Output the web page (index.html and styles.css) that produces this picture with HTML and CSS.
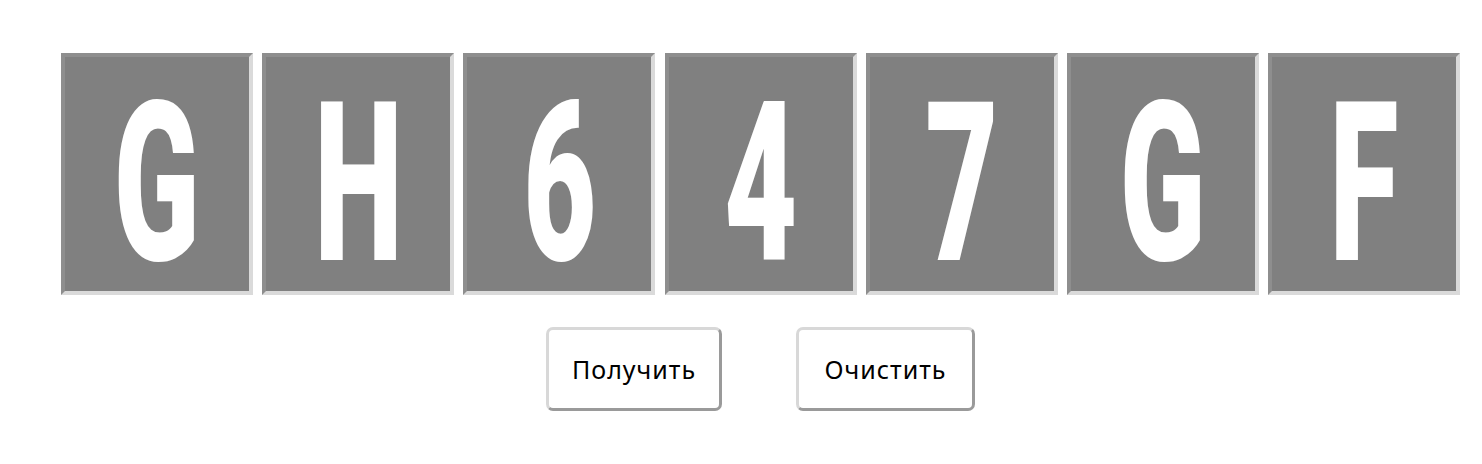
FILE: index.html
```html
<!DOCTYPE html>
<html lang="ru">
<head>
<meta charset="utf-8">
<title>Captcha</title>
<link rel="stylesheet" href="styles.css">
</head>
<body>
<div class="wrap">
  <div class="code">
    <div class="cell"><span class="ch">G</span></div>
    <div class="cell"><span class="ch">H</span></div>
    <div class="cell"><span class="ch">6</span></div>
    <div class="cell"><span class="ch">4</span></div>
    <div class="cell"><span class="ch">7</span></div>
    <div class="cell"><span class="ch">G</span></div>
    <div class="cell"><span class="ch">F</span></div>
  </div>
  <div class="actions">
    <button class="btn btn-get">Получить</button>
    <button class="btn btn-clear">Очистить</button>
  </div>
</div>
</body>
</html>
```
FILE: styles.css
```css
html, body {
  margin: 0;
  padding: 0;
  background: #ffffff;
}
.wrap {
  margin-left: 61px;
  width: 1399px;
  padding-top: 53px;
}
.code {
  display: flex;
  gap: 9.2px;
}
.cell {
  box-sizing: border-box;
  flex: none;
  width: 192px;
  height: 242px;
  background: #808080;
  border: 4px solid;
  border-color: #8e8e8e #dadada #dadada #8e8e8e;
  display: flex;
  align-items: center;
  justify-content: center;
}
.ch {
  display: inline-block;
  font-family: Roboto, "Liberation Sans", sans-serif;
  font-weight: 900;
  font-size: 175px;
  line-height: 0.9;
  color: #ffffff;
  transform: translateY(11px) scale(0.72, 1.27);
}
.actions {
  display: flex;
  justify-content: center;
  gap: 74px;
  margin-top: 32px;
}
.btn {
  box-sizing: border-box;
  height: 84px;
  padding: 0;
  background: #ffffff;
  border: 3px solid;
  border-color: #d8d8d8 #9a9a9a #9a9a9a #d8d8d8;
  border-radius: 7px;
  font-family: "Noto Sans", "Open Sans", sans-serif;
  font-size: 25px;
  letter-spacing: 1px;
  color: #000000;
}
.btn-get {
  width: 176px;
}
.btn-clear {
  width: 179px;
}
```
